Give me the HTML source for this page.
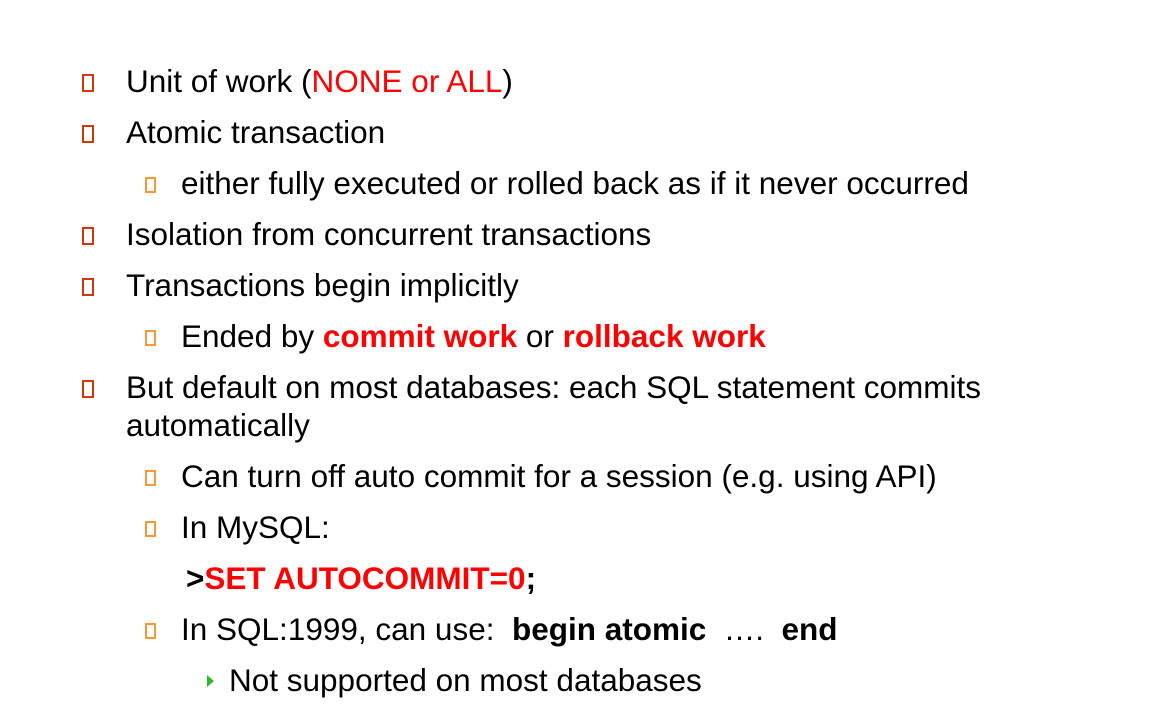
<!DOCTYPE html>
<html><head><meta charset="utf-8"><style>
html,body{margin:0;padding:0;background:#fff;width:1153px;height:723px;overflow:hidden;position:relative}
.l{position:absolute;font-family:"Liberation Sans",Arial,sans-serif;font-size:31.5px;line-height:36px;color:#000;white-space:nowrap;margin-top:-1px}
.r{color:#f00}
.b{font-weight:bold}
.b1{position:absolute;width:8px;height:14px;border:2px solid #cc3a0a}
.b2{position:absolute;width:7px;height:12px;border:2px solid #f59a3c}
.tri{position:absolute;width:0;height:0;border-top:6px solid transparent;border-bottom:6px solid transparent;border-left:7px solid #2db82d}
</style></head><body>
<div class="b1" style="left:82px;top:74px"></div><div class="l" style="left:126px;top:64px">Unit of work (<span class="r">NONE or ALL</span>)</div>
<div class="b1" style="left:82px;top:125px"></div><div class="l" style="left:126px;top:115px">Atomic transaction</div>
<div class="b2" style="left:145px;top:177px"></div><div class="l" style="left:181px;top:166px">either fully executed or rolled back as if it never occurred</div>
<div class="b1" style="left:82px;top:227px"></div><div class="l" style="left:126px;top:217px">Isolation from concurrent transactions</div>
<div class="b1" style="left:82px;top:278px"></div><div class="l" style="left:126px;top:268px">Transactions begin implicitly</div>
<div class="b2" style="left:145px;top:330px"></div><div class="l" style="left:181px;top:319px">Ended by <span class="r b">commit work</span> or <span class="r b">rollback work</span></div>
<div class="b1" style="left:82px;top:380px"></div><div class="l" style="left:126px;top:370px">But default on most databases: each SQL statement commits</div>
<div class="l" style="left:126px;top:408px">automatically</div>
<div class="b2" style="left:145px;top:470px"></div><div class="l" style="left:181px;top:459px">Can turn off auto commit for a session (e.g. using API)</div>
<div class="b2" style="left:145px;top:521px"></div><div class="l" style="left:181px;top:510px">In MySQL:</div>
<div class="l b" style="left:186px;top:561px">&gt;<span class="r">SET AUTOCOMMIT=0</span>;</div>
<div class="b2" style="left:145px;top:623px"></div><div class="l" style="left:181px;top:612px">In SQL:1999, can use:&nbsp; <span class="b">begin atomic</span>&nbsp; ….&nbsp; <span class="b">end</span></div>
<div class="tri" style="left:207px;top:675px"></div><div class="l" style="left:229px;top:663px">Not supported on most databases</div>
</body></html>
